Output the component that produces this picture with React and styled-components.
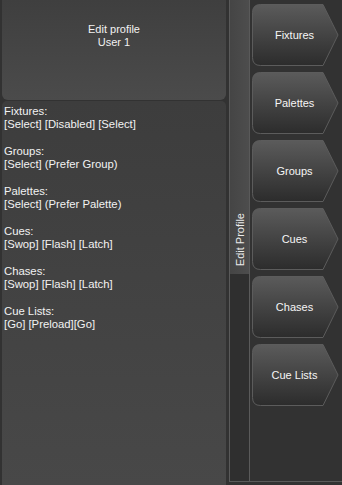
import styled, { createGlobalStyle } from "styled-components";

const GlobalStyle = createGlobalStyle`
  html, body {
    margin: 0;
    padding: 0;
    background: #323232;
  }
  body {
    font-family: "Liberation Sans", Arial, sans-serif;
    font-size: 11px;
    color: #f2f2f2;
  }
`;

const Screen = styled.div`
  width: 342px;
  height: 485px;
  display: flex;
  background: #323232;
  overflow: hidden;
`;

const LeftColumn = styled.div`
  width: 224px;
  margin-left: 2px;
  display: flex;
  flex-direction: column;
  gap: 1px;
`;

const Header = styled.div`
  height: 100px;
  box-sizing: border-box;
  padding-top: 23px;
  border-radius: 0 0 6px 6px;
  background: linear-gradient(#3f3f3f, #4b4b4b);
  text-align: center;
  line-height: 13px;
`;

const Details = styled.div`
  flex: 1;
  padding: 4px 2px 0;
  border-radius: 5px 5px 0 0;
  background: linear-gradient(#3d3d3d, #484848);
  line-height: 13.33px;
  font-size: 11.3px;
`;

const Block = styled.div`
  margin-bottom: 13.33px;
  white-space: nowrap;
`;

const Frame = styled.div`
  flex: 1;
  margin-left: 3px;
  height: 482px;
  box-sizing: border-box;
  border-left: 1px solid #5a5a5a;
  border-bottom: 1px solid #5a5a5a;
  display: flex;
`;

const SideStrip = styled.div`
  width: 19px;
  border-right: 1px solid #5a5a5a;
  background: #2f2f2f;
`;

const SideTab = styled.div`
  height: 274px;
  background: linear-gradient(90deg, #454545, #4d4d4d);
  display: flex;
  align-items: flex-end;
  justify-content: center;
  padding-bottom: 8px;
  box-sizing: border-box;
`;

const SideLabel = styled.span`
  writing-mode: vertical-rl;
  transform: rotate(180deg);
  white-space: nowrap;
  color: #eaeaea;
  font-size: 11px;
`;

const ButtonColumn = styled.div`
  flex: 1;
  padding: 4px 0 0 2px;
  display: flex;
  flex-direction: column;
  gap: 6px;
`;

const SoftButton = styled.div`
  position: relative;
  width: 87px;
  height: 62px;
  display: flex;
  align-items: center;
  justify-content: center;
  padding-right: 2px;
  box-sizing: border-box;
  color: #f6f6f6;

  svg {
    position: absolute;
    inset: 0;
  }

  span {
    position: relative;
  }
`;

function ArrowButton({ label, id }) {
  return (
    <SoftButton>
      <svg width="87" height="62" viewBox="0 0 87 62">
        <defs>
          <linearGradient id={`g-${id}`} x1="0" y1="0" x2="0" y2="1">
            <stop offset="0" stopColor="#5b5b5b" />
            <stop offset="1" stopColor="#2c2c2c" />
          </linearGradient>
        </defs>
        <path
          d="M8.5,0.5 H71 L86,31 L71,61.5 H8.5 Q0.5,61.5 0.5,53.5 V8.5 Q0.5,0.5 8.5,0.5 Z"
          fill={`url(#g-${id})`}
          stroke="#5c5c5c"
          strokeWidth="1"
        />
      </svg>
      <span>{label}</span>
    </SoftButton>
  );
}

const sections = [
  ["Fixtures:", "[Select] [Disabled] [Select]"],
  ["Groups:", "[Select] (Prefer Group)"],
  ["Palettes:", "[Select] (Prefer Palette)"],
  ["Cues:", "[Swop] [Flash] [Latch]"],
  ["Chases:", "[Swop] [Flash] [Latch]"],
  ["Cue Lists:", "[Go] [Preload][Go]"],
];

const buttons = ["Fixtures", "Palettes", "Groups", "Cues", "Chases", "Cue Lists"];

export default function App() {
  return (
    <>
      <GlobalStyle />
      <Screen>
        <LeftColumn>
          <Header>
            Edit profile
            <br />
            User 1
          </Header>
          <Details>
            {sections.map(([title, value]) => (
              <Block key={title}>
                {title}
                <br />
                {value}
              </Block>
            ))}
          </Details>
        </LeftColumn>
        <Frame>
          <SideStrip>
            <SideTab>
              <SideLabel>Edit Profile</SideLabel>
            </SideTab>
          </SideStrip>
          <ButtonColumn>
            {buttons.map((b, i) => (
              <ArrowButton key={b} label={b} id={i} />
            ))}
          </ButtonColumn>
        </Frame>
      </Screen>
    </>
  );
}
